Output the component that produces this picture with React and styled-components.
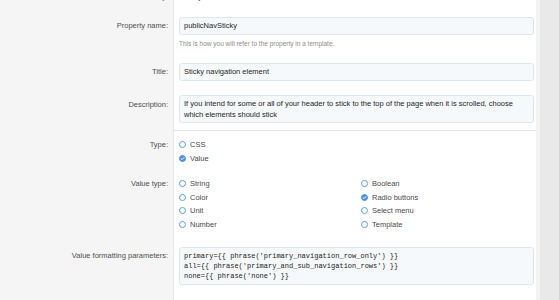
import React from "react";
import styled, { createGlobalStyle } from "styled-components";

const Global = createGlobalStyle`
  html, body { margin: 0; padding: 0; overflow: hidden; background: #e9e9e9; }
  body { font-family: "Liberation Sans", Arial, sans-serif; }
`;

const Page = styled.div`
  display: flex;
  width: 559px;
  height: 300px;
  overflow: hidden;
`;

const Panel = styled.div`
  width: 536px;
  flex: none;
  background: linear-gradient(to right, #f5f5f5 0 173px, #e8e8e8 173px 174px, #ffffff 174px);
`;

const Gutter = styled.div`
  flex: 1;
  background: #e9e9e9;
  border-left: 4px solid #f3f3f3;
`;

const Form = styled.div`
  margin-top: -8px;
`;

const Row = styled.div`
  display: grid;
  grid-template-columns: 174px 1fr;
  align-items: start;
`;

const Label = styled.div`
  box-sizing: border-box;
  text-align: right;
  padding: ${(p) => p.$pt}px 5px 0 0;
  width: 173px;
  font-size: 7.5px;
  line-height: ${(p) => p.$lh || 10}px;
  color: #4f4f4f;
  white-space: nowrap;
`;

const Field = styled.div`
  padding: ${(p) => p.$pt ?? 7}px 2px ${(p) => p.$pb ?? 7}px 5px;
  border-top: ${(p) => (p.$separated ? "1px solid #e4e6e9" : "none")};
  margin-left: ${(p) => (p.$separated ? "-1px" : "0")};
  padding-left: ${(p) => (p.$separated ? "6px" : "5px")};
  min-width: 0;
`;

const Plain = styled.div`
  font-size: 7.5px;
  line-height: 10px;
  color: #222;
`;

const Input = styled.div`
  box-sizing: border-box;
  height: 18px;
  padding: 0 4px;
  border: 1px solid #dfe5ec;
  border-radius: 3px;
  background: #f6f9fc;
  font-size: 7.5px;
  line-height: 16px;
  color: #1e1e1e;
`;

const TextArea = styled(Input)`
  height: 28px;
  padding: 2px 4px;
  line-height: 11px;
`;

const Code = styled(Input)`
  height: 38px;
  padding: 3px 4px;
  font-family: "Liberation Mono", "DejaVu Sans Mono", monospace;
  font-size: 7px;
  line-height: 10px;
  white-space: pre;
  color: #222;
`;

const Help = styled.div`
  margin-top: 4px;
  font-size: 6.5px;
  line-height: 10px;
  color: #8d8d8d;
`;

const RadioList = styled.div`
  display: grid;
  grid-template-columns: ${(p) => (p.$cols === 2 ? "1fr 1fr" : "1fr")};
  grid-template-rows: ${(p) => `repeat(${p.$rows}, 13.5px)`};
  grid-auto-flow: column;
  column-gap: 9px;
`;

const Option = styled.label`
  display: flex;
  align-items: center;
  gap: 4px;
  height: 13.5px;
  font-size: 7.5px;
  color: #4a4a4a;
`;

const Circle = styled.span`
  box-sizing: border-box;
  width: 7px;
  height: 7px;
  border-radius: 50%;
  flex: none;
  border: 1.1px solid #5a9fd8;
  background: ${(p) => (p.$checked ? "#4d93d6" : "#fff")};
  display: flex;
  align-items: center;
  justify-content: center;
  border-color: ${(p) => (p.$checked ? "#4d93d6" : "#5a9fd8")};
`;

function Radio({ checked, children }) {
  return (
    <Option>
      <Circle $checked={checked}>
        {checked && (
          <svg width="5" height="5" viewBox="0 0 10 10">
            <path d="M2 5.2 L4.2 7.3 L8 3" fill="none" stroke="#fff" strokeWidth="1.8" strokeLinecap="round" strokeLinejoin="round" />
          </svg>
        )}
      </Circle>
      {children}
    </Option>
  );
}

export default function App() {
  return (
    <>
      <Global />
      <Page>
        <Panel>
          <Form>
            <Row>
              <Label $pt={0}>Directory:</Label>
              <Field $pt={0} $pb={8}>
                <Plain>Library</Plain>
              </Field>
            </Row>
            <Row>
              <Label $pt={11}>Property name:</Label>
              <Field>
                <Input>publicNavSticky</Input>
                <Help>This is how you will refer to the property in a template.</Help>
              </Field>
            </Row>
            <Row>
              <Label $pt={11}>Title:</Label>
              <Field>
                <Input>Sticky navigation element</Input>
              </Field>
            </Row>
            <Row>
              <Label $pt={11} $lh={11}>Description:</Label>
              <Field>
                <TextArea>
                  If you intend for some or all of your header to stick to the top of the page when it is scrolled, choose
                  <br />
                  which elements should stick
                </TextArea>
              </Field>
            </Row>
            <Row>
              <Label $pt={8} $lh={13.5}>Type:</Label>
              <Field $separated $pt={7} $pb={6}>
                <RadioList $rows={2}>
                  <Radio>CSS</Radio>
                  <Radio checked>Value</Radio>
                </RadioList>
              </Field>
            </Row>
            <Row>
              <Label $pt={6} $lh={13.5}>Value type:</Label>
              <Field $pt={6} $pb={9}>
                <RadioList $rows={4} $cols={2}>
                  <Radio>String</Radio>
                  <Radio>Color</Radio>
                  <Radio>Unit</Radio>
                  <Radio>Number</Radio>
                  <Radio>Boolean</Radio>
                  <Radio checked>Radio buttons</Radio>
                  <Radio>Select menu</Radio>
                  <Radio>Template</Radio>
                </RadioList>
              </Field>
            </Row>
            <Row>
              <Label $pt={11}>Value formatting parameters:</Label>
              <Field>
                <Code>{`primary={{ phrase('primary_navigation_row_only') }}
all={{ phrase('primary_and_sub_navigation_rows') }}
none={{ phrase('none') }}`}</Code>
              </Field>
            </Row>
          </Form>
        </Panel>
        <Gutter />
      </Page>
    </>
  );
}
